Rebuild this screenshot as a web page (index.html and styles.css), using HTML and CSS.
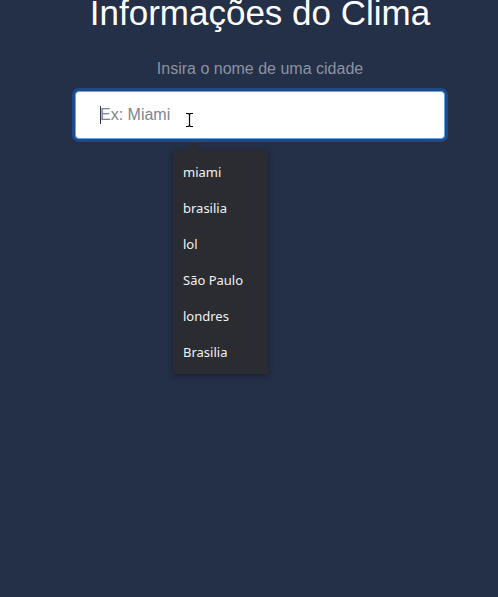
FILE: index.html
```html
<!DOCTYPE html>
<html lang="pt-BR">
<head>
<meta charset="utf-8">
<title>Informações do Clima</title>
<link rel="stylesheet" href="styles.css">
</head>
<body>
<main class="app">
  <h1 class="title">Informações do Clima</h1>
  <label class="label" for="city">Insira o nome de uma cidade</label>
  <div class="field">
    <div class="input">
      <span class="caret"></span>
      <span class="placeholder">Ex: Miami</span>
      <svg class="ibeam" width="9" height="16" viewBox="0 0 9 16">
        <path d="M1 1.5h2.5l1 1 1-1H8M4.5 2.5v11M1 14.5h2.5l1-1 1 1H8" fill="none" stroke="#fff" stroke-width="3"/>
        <path d="M1 1.5h2.5l1 1 1-1H8M4.5 2.5v11M1 14.5h2.5l1-1 1 1H8" fill="none" stroke="#000" stroke-width="1.2"/>
      </svg>
    </div>
    <ul class="suggestions">
      <li>miami</li>
      <li>brasilia</li>
      <li>lol</li>
      <li>São Paulo</li>
      <li>londres</li>
      <li>Brasilia</li>
    </ul>
  </div>
</main>
</body>
</html>
```

FILE: styles.css
```css
html, body {
  margin: 0;
  padding: 0;
  height: 100%;
}
body {
  background: #242f48;
  font-family: "Liberation Sans", Arial, sans-serif;
  overflow: hidden;
}
.app {
  width: 370px;
  margin-left: 75px;
  display: flex;
  flex-direction: column;
  align-items: center;
}
.title {
  margin: -7px 0 0;
  font-size: 35px;
  font-weight: normal;
  color: #ffffff;
  line-height: 40px;
  white-space: nowrap;
}
.label {
  margin-top: 26px;
  font-size: 16px;
  color: #8d93a1;
  line-height: 20px;
}
.field {
  position: relative;
  width: 100%;
  margin-top: 12px;
}
.input {
  box-sizing: border-box;
  height: 48px;
  width: 100%;
  background: #ffffff;
  border: 1px solid #6aa4e8;
  border-radius: 4px;
  box-shadow: 0 0 0 3px #1d4b8a;
  display: flex;
  align-items: center;
  padding-left: 24px;
  position: relative;
}
.caret {
  width: 1px;
  height: 18px;
  background: #333;
}
.placeholder {
  font-size: 16px;
  color: #7d8591;
  margin-left: -1px;
}
.ibeam {
  position: absolute;
  left: 109px;
  top: 20px;
}
.suggestions {
  position: absolute;
  left: 98px;
  top: 59px;
  width: 95px;
  margin: 0;
  padding: 4px 0;
  list-style: none;
  background: #2a2c31;
  border-radius: 2px;
  box-shadow: 0 2px 6px rgba(0,0,0,0.35);
  font-family: "Noto Sans", "Open Sans", sans-serif;
  font-size: 13px;
  color: #f2f2f2;
}
.suggestions::before {
  content: "";
  position: absolute;
  left: 13px;
  top: -8px;
  border-left: 8px solid transparent;
  border-right: 8px solid transparent;
  border-bottom: 8px solid #2a2c31;
}
.suggestions li {
  height: 36px;
  line-height: 36px;
  padding-left: 10px;
}
```
